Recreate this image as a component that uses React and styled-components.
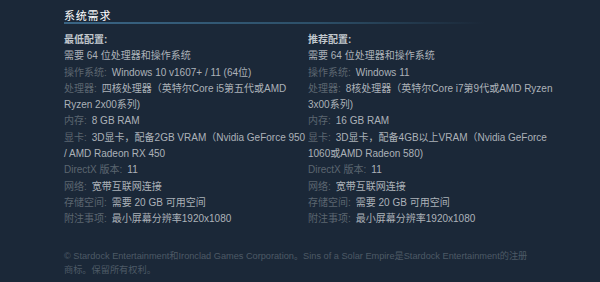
import React from "react";
import styled, { createGlobalStyle } from "styled-components";

const Global = createGlobalStyle`
    html, body {
        margin: 0;
        padding: 0;
        background: #1b2838;
    }
    body {
        font-family: "Liberation Sans", "Noto Sans CJK SC", Arial, sans-serif;
    }
`;

const minReq = [
    { value: "需要 64 位处理器和操作系统" },
    { label: "操作系统:", value: "Windows 10 v1607+ / 11 (64位)" },
    { label: "处理器:", value: "四核处理器（英特尔Core i5第五代或AMD Ryzen 2x00系列)" },
    { label: "内存:", value: "8 GB RAM" },
    { label: "显卡:", value: "3D显卡，配备2GB VRAM（Nvidia GeForce 950 / AMD Radeon RX 450" },
    { label: "DirectX 版本:", value: "11" },
    { label: "网络:", value: "宽带互联网连接" },
    { label: "存储空间:", value: "需要 20 GB 可用空间" },
    { label: "附注事项:", value: "最小屏幕分辨率1920x1080" },
];

const recReq = [
    { value: "需要 64 位处理器和操作系统" },
    { label: "操作系统:", value: "Windows 11" },
    { label: "处理器:", value: "8核处理器（英特尔Core i7第9代或AMD Ryzen 3x00系列)" },
    { label: "内存:", value: "16 GB RAM" },
    { label: "显卡:", value: "3D显卡，配备4GB以上VRAM（Nvidia GeForce 1060或AMD Radeon 580)" },
    { label: "DirectX 版本:", value: "11" },
    { label: "网络:", value: "宽带互联网连接" },
    { label: "存储空间:", value: "需要 20 GB 可用空间" },
    { label: "附注事项:", value: "最小屏幕分辨率1920x1080" },
];

const ReqColumn = ({ title, items }) => (
    <Column>
        <ColTitle>{title}</ColTitle>
        <List>
            {items.map((it, i) => (
                <Item key={i}>
                    {it.label && <Label>{it.label}</Label>}
                    {it.value}
                </Item>
            ))}
        </List>
    </Column>
);

const App = () => {
    return (
        <Page>
            <Global />
            <Heading>系统需求</Heading>
            <Columns>
                <ReqColumn title="最低配置:" items={minReq} />
                <ReqColumn title="推荐配置:" items={recReq} />
            </Columns>
            <Legal>
                © Stardock Entertainment和Ironclad Games Corporation。Sins of a Solar Empire是Stardock Entertainment的注册商标。保留所有权利。
            </Legal>
        </Page>
    );
};

export default App;

const Page = styled.div`
    width: 600px;
    height: 282px;
    box-sizing: border-box;
    padding: 9px 0 0 64px;
    background: #1b2838;
    overflow: hidden;
`;

const Heading = styled.h2`
    margin: 0;
    width: 420px;
    font-size: 11px;
    line-height: 14px;
    font-weight: normal;
    letter-spacing: 0.8px;
    color: #ffffff;
    padding-bottom: 1px;
    background-image: linear-gradient(to right, #3a6585 0%, #2d5069 60%, rgba(27, 40, 56, 0) 100%);
    background-size: 100% 2px;
    background-position: left bottom;
    background-repeat: no-repeat;
`;

const Columns = styled.div`
    display: grid;
    grid-template-columns: 242px 246px;
    column-gap: 2px;
    margin-top: 8px;
`;

const Column = styled.div`
    font-size: 10px;
    line-height: 16.3px;
    color: #acb2b8;
`;

const ColTitle = styled.div`
    font-weight: bold;
    color: #c3c9ce;
`;

const List = styled.ul`
    list-style: none;
    margin: 0;
    padding: 0;
`;

const Item = styled.li`
    margin: 0;
`;

const Label = styled.span`
    color: #5b6670;
    margin-right: 5px;
`;

const Legal = styled.div`
    margin-top: 21px;
    width: 472px;
    font-size: 9.2px;
    line-height: 14px;
    color: #4d5a66;
`;
